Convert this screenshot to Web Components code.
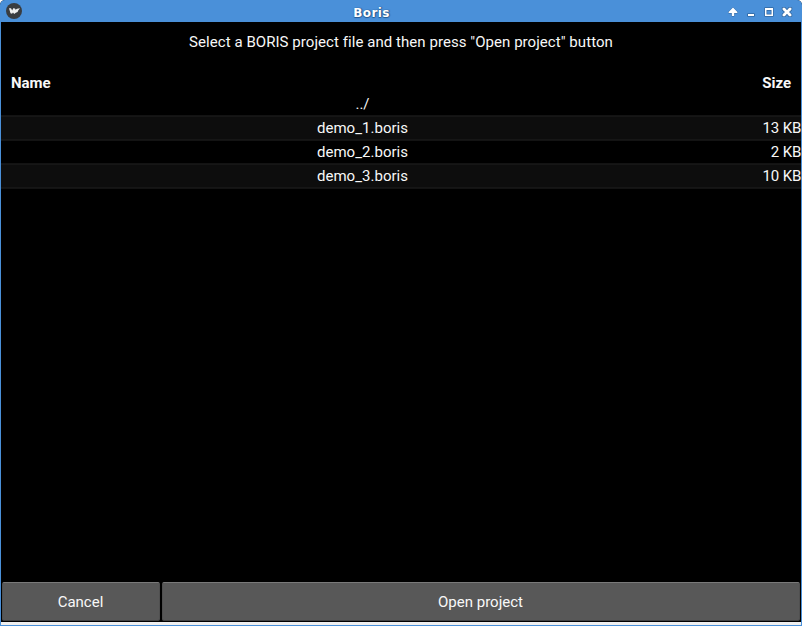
<!DOCTYPE html>
<html lang="en"><head><meta charset="utf-8"><title>Boris</title>
<style>html,body{margin:0;height:100%;background:#fff;overflow:hidden}</style></head>
<body>
<boris-window caption="Boris">
  <file-chooser>
    <file-row name="../"></file-row>
    <file-row name="demo_1.boris" size="13 KB" shaded></file-row>
    <file-row name="demo_2.boris" size="2 KB"></file-row>
    <file-row name="demo_3.boris" size="10 KB" shaded></file-row>
  </file-chooser>
  <flat-button slot="actions">Cancel</flat-button>
  <flat-button slot="actions">Open project</flat-button>
</boris-window>
<script>
class TitleBar extends HTMLElement{
  constructor(){super();this.attachShadow({mode:'open'}).innerHTML=`
<style>
:host{display:grid;grid-template-columns:82px 1fr 82px;align-items:center;height:22px;background:#4a90d9;color:#fff}
.t{font:bold 12px/18px "DejaVu Sans",sans-serif;text-align:center;letter-spacing:.35px;padding:4px 59px 0 0;box-sizing:border-box;height:22px;text-shadow:0 1px 1px #24588f,0 0 1px #24588f,1px 0 1px #24588f}
svg{display:block}
</style>
<svg width="82" height="22" viewBox="0 0 82 22"><circle cx="14" cy="11" r="8" fill="#393c40"/><path d="M9 8.3L11 8.3 12.2 10.6 13.2 8.3 15 8.6 15.6 9.8 17 8.8 20 8.3 18.2 10.4 17.6 12 15.8 12.8 14.2 14 13 12.4 12 13.8 10.5 13.3Z" fill="#f0f0f0"/></svg>
<div class="t"><slot></slot></div>
<svg width="82" height="22" viewBox="720 0 82 22"><g fill="#fff" stroke="#30659e" stroke-width="1.6" paint-order="stroke" stroke-linejoin="round">
<path d="M733 7.6L737.4 12V13H734.2V16H731.8V13H728.6V12Z" stroke-width="1"/>
<path d="M748 14h6v2h-6z"/>
<path fill-rule="evenodd" d="M765 8h8v8h-8zM766.5 10v4.5h5v-4.5z" stroke-width="1.3"/>
<path d="M782.6 7.8h2.2l2.2 2.4 2.2-2.4h2.2v2L789 12l2.4 2.3V16.2h-2.2l-2.2-2.4-2.2 2.4h-2.2v-1.9l2.4-2.3-2.4-2.2z"/></g></svg>`}
}
customElements.define('title-bar',TitleBar);
class BorisWindow extends HTMLElement{
  constructor(){super();this.attachShadow({mode:'open'}).innerHTML=`
<style>
:host{display:flex;flex-direction:column;width:802px;height:626px;box-sizing:border-box;background:#000;border-radius:5px 5px 0 0;overflow:hidden;color:#f8f8f8;font:15px/24px Roboto,sans-serif;border-bottom:1px solid #4a90d9}
.body{flex:1;display:flex;flex-direction:column;border:solid #4a90d9;border-width:0 1px}
.main{flex:1}
.actions{display:grid;grid-template-columns:158px 638px;gap:2px;padding:0 1px 1px}
.foot{height:3px;background:#efefef}
</style>
<title-bar></title-bar>
<div class="body"><div class="main"><slot></slot></div><div class="actions"><slot name="actions"></slot></div><div class="foot"></div></div>`;
  this.shadowRoot.querySelector('title-bar').textContent=this.getAttribute('caption')}
}
customElements.define('boris-window',BorisWindow);
class FileChooser extends HTMLElement{
  constructor(){super();this.attachShadow({mode:'open'}).innerHTML=`
<style>
:host{display:block}
.hint{text-align:center;padding-top:8px;height:41px;box-sizing:border-box;letter-spacing:.055px}
.head{display:flex;justify-content:space-between;padding:8px 10px 0;height:29px;box-sizing:border-box;font-weight:bold}
</style>
<div class="hint">Select a BORIS project file and then press "Open project" button</div>
<div class="head"><span>Name</span><span>Size</span></div>
<slot></slot>`}
}
customElements.define('file-chooser',FileChooser);
class FileRow extends HTMLElement{
  constructor(){super();this.attachShadow({mode:'open'}).innerHTML=`
<style>
:host{display:grid;grid-template-columns:723px 1fr;height:24px}
:host([shaded]){background:#0d0d0d;box-shadow:inset 0 -1px #161616,inset 0 1px #161616,0 -1px #131313,0 1px #131313}
.n{text-align:center;letter-spacing:.03px}.s{text-align:right;letter-spacing:-.08px;margin-right:-.4px}
</style><span class="n"></span><span class="s"></span>`;
  this.shadowRoot.querySelector('.n').textContent=this.getAttribute('name');
  this.shadowRoot.querySelector('.s').textContent=this.getAttribute('size')||''}
}
customElements.define('file-row',FileRow);
class FlatButton extends HTMLElement{
  constructor(){super();this.attachShadow({mode:'open'}).innerHTML=`
<style>
:host{display:flex;align-items:center;justify-content:center;height:39px;box-sizing:border-box;background:#585858;border-radius:2px;border:1px solid #505050;border-top-color:#7a7a7a;border-bottom-color:#424242;padding-right:1px}
</style><slot></slot>`}
}
customElements.define('flat-button',FlatButton);
</script>
</body></html>
